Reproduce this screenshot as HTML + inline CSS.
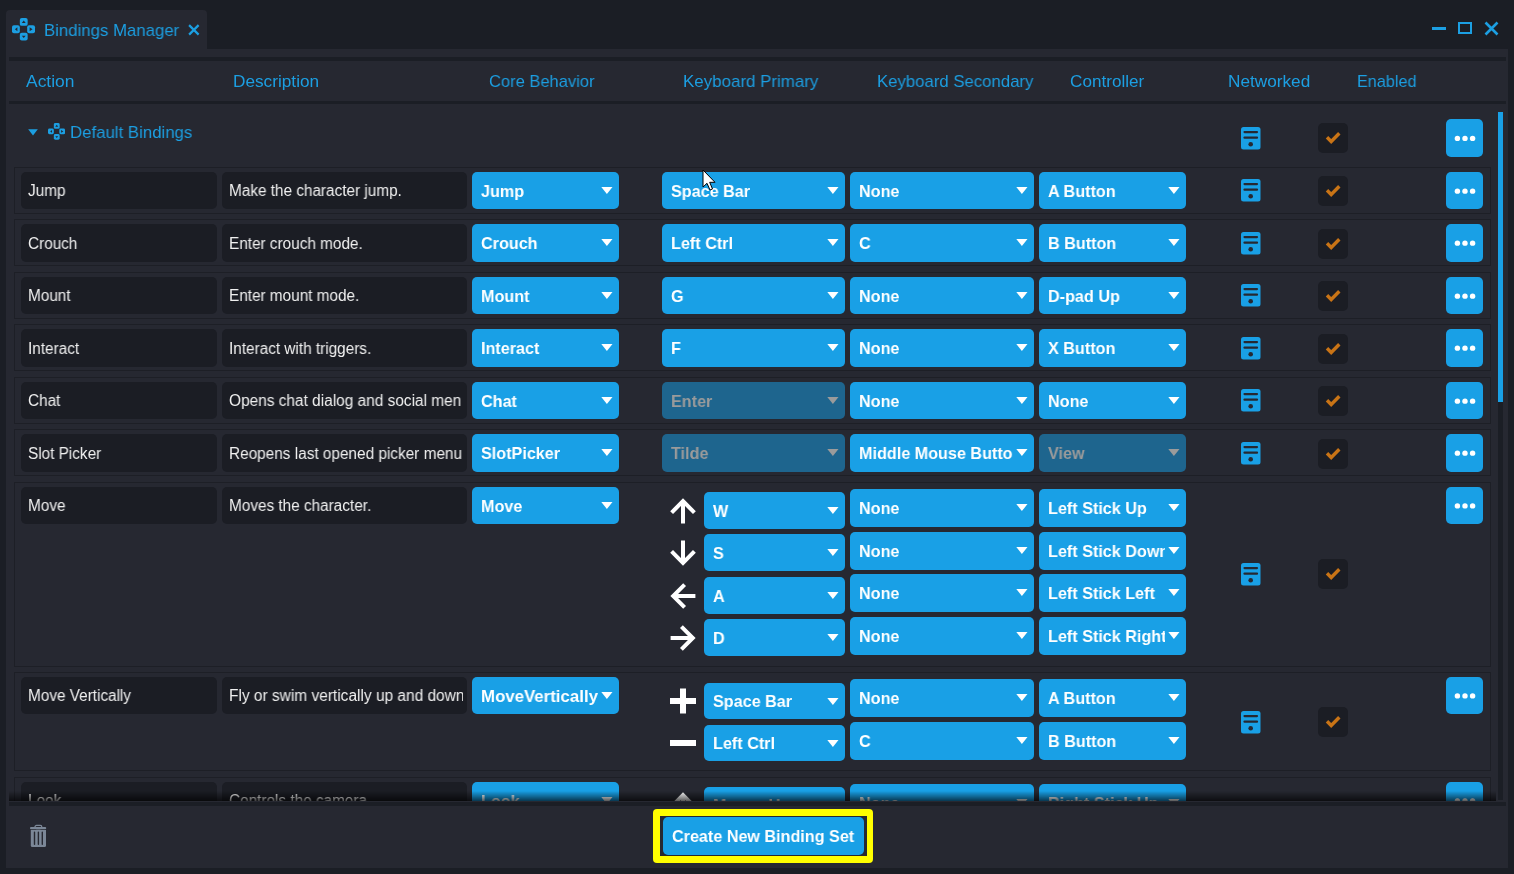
<!DOCTYPE html><html><head><meta charset="utf-8"><style>
*{margin:0;padding:0;box-sizing:border-box}
html,body{width:1514px;height:874px;overflow:hidden;background:#1b1e25;font-family:"Liberation Sans",sans-serif;-webkit-font-smoothing:antialiased}
.t,.ddt,.fldt{will-change:transform}
.t{position:absolute;white-space:nowrap;line-height:1}
.h{color:#1c9fe2;font-size:18px}
.dd{position:absolute;border-radius:5px;overflow:hidden}
.ddt{position:absolute;left:8.5px;top:10.7px;font-size:17px;font-weight:bold;line-height:1;white-space:nowrap;overflow:hidden;transform:scaleX(0.951);transform-origin:0 0}
.tri{position:absolute;right:6.4px;top:15px}
.fld{position:absolute;background:#1b1d24;border-radius:5px;overflow:hidden}
.fldt{position:absolute;left:7px;top:11.4px;font-size:15.6px;color:#f0f0f0;line-height:1;white-space:nowrap;overflow:hidden;transform:scaleX(0.958);transform-origin:0 0}
.ico{position:absolute}
.chk{position:absolute;width:30px;height:30px;background:#1b1d24;border-radius:5px}
.ell{position:absolute;width:37px;background:#19a0e6;border-radius:5px}
</style></head><body>
<div style="position:absolute;left:6px;top:10px;width:201px;height:40px;background:#262831;border-radius:4px 4px 0 0"></div>
<div style="position:absolute;left:6px;top:49px;width:1502px;height:819px;background:#262831"></div>
<svg class="ico" style="left:12.3px;top:18.1px" width="23.5" height="23.5" viewBox="0 0 24 24">
<rect x="8" y="0" width="8" height="8" rx="2" fill="#1c9fe2"/><rect x="0" y="7.5" width="8" height="8" rx="2" fill="#1c9fe2"/>
<rect x="15.5" y="7.5" width="8" height="8" rx="2" fill="#1c9fe2"/><rect x="8" y="15" width="8" height="8" rx="2" fill="#1c9fe2"/>
<path d="M12 2.5 L14 5 L10 5Z M3 11.5 L5.5 9.5 L5.5 13.5Z M21 11.5 L18 9.5 L18 13.5Z M12 20.5 L14 18 L10 18Z" fill="#262831"/></svg>
<div class="t h" style="left:43.9px;top:21.5px;font-size:17px;transform:scaleX(0.9869);transform-origin:0 0;">Bindings Manager</div>
<svg class="ico" style="left:187.7px;top:23.7px" width="12" height="12" viewBox="0 0 12 12"><path d="M1.1 1.1L10.6 10.6M10.6 1.1L1.1 10.6" stroke="#1c9fe2" stroke-width="2.2"/></svg>
<div style="position:absolute;left:1432px;top:27px;width:14px;height:3px;background:#1c9fe2"></div>
<div style="position:absolute;left:1458px;top:22.3px;width:14px;height:11.5px;border:2px solid #1c9fe2"></div>
<svg class="ico" style="left:1484px;top:21px" width="15" height="15" viewBox="0 0 15 15"><path d="M1.5 1.5L13.5 13.5M13.5 1.5L1.5 13.5" stroke="#1c9fe2" stroke-width="2.6"/></svg>
<div style="position:absolute;left:9px;top:57px;width:1497px;height:4px;background:#1b1e25"></div>
<div style="position:absolute;left:9px;top:101px;width:1497px;height:3px;background:#1b1e25"></div>
<div class="t h" style="left:26.3px;top:72.7px;font-size:17px;transform:scaleX(1.0254);transform-origin:0 0;">Action</div>
<div class="t h" style="left:233.4px;top:72.7px;font-size:17px;transform:scaleX(1.0129);transform-origin:0 0;">Description</div>
<div class="t h" style="left:489.2px;top:72.7px;font-size:17px;transform:scaleX(0.9715);transform-origin:0 0;">Core Behavior</div>
<div class="t h" style="left:683.4px;top:72.7px;font-size:17px;transform:scaleX(0.9949);transform-origin:0 0;">Keyboard Primary</div>
<div class="t h" style="left:877.4px;top:72.7px;font-size:17px;transform:scaleX(0.9849);transform-origin:0 0;">Keyboard Secondary</div>
<div class="t h" style="left:1070.4px;top:72.7px;font-size:17px;transform:scaleX(1.0081);transform-origin:0 0;">Controller</div>
<div class="t h" style="left:1227.5px;top:72.7px;font-size:17px;transform:scaleX(1.0123);transform-origin:0 0;">Networked</div>
<div class="t h" style="left:1357.4px;top:72.7px;font-size:17px;transform:scaleX(0.9535);transform-origin:0 0;">Enabled</div>
<div style="position:absolute;left:9px;top:104px;width:1487px;height:697px;overflow:hidden"><div style="position:absolute;left:-9px;top:0;width:1514px;height:697px">
<svg class="ico" style="left:27.5px;top:24.5px" width="10" height="7" viewBox="0 0 10 7"><path d="M0.2 0.2 H9.8 L5 6.6Z" fill="#1c9fe2"/></svg>
<svg class="ico" style="left:47.8px;top:18.799999999999997px" width="17.5" height="17.5" viewBox="0 0 24 24">
<rect x="8" y="0" width="8" height="8" rx="2" fill="#1c9fe2"/><rect x="0" y="7.5" width="8" height="8" rx="2" fill="#1c9fe2"/>
<rect x="15.5" y="7.5" width="8" height="8" rx="2" fill="#1c9fe2"/><rect x="8" y="15" width="8" height="8" rx="2" fill="#1c9fe2"/>
<path d="M12 2.5 L14 5 L10 5Z M3 11.5 L5.5 9.5 L5.5 13.5Z M21 11.5 L18 9.5 L18 13.5Z M12 20.5 L14 18 L10 18Z" fill="#262831"/></svg>
<div class="t h" style="left:69.9px;top:19.700000000000003px;font-size:17px;transform:scaleX(0.9879);transform-origin:0 0;">Default Bindings</div>
<svg class="ico" style="left:1241.4px;top:22.5px" width="20" height="23" viewBox="0 0 20 23"><rect x="0" y="0" width="19.5" height="22.5" rx="2.5" fill="#19a0e6"/><rect x="2.4" y="3.9" width="14.7" height="2.3" rx="1.1" fill="#262831"/><rect x="2.4" y="9.5" width="14.7" height="2.3" rx="1.1" fill="#262831"/><circle cx="9.7" cy="17.3" r="2.3" fill="#262831"/></svg>
<div class="chk" style="left:1318px;top:19px"></div><svg class="ico" style="left:1318px;top:19px" width="30" height="30" viewBox="0 0 30 30"><path d="M9 14.3 L13.2 18.5 L21.3 10.3" fill="none" stroke="#c97416" stroke-width="3.4"/></svg>
<div class="ell" style="left:1446px;top:15px;height:38px"><svg width="37" height="38" viewBox="0 0 37 38"><circle cx="11.4" cy="19.4" r="2.7" fill="#fff"/><circle cx="19" cy="19.4" r="2.7" fill="#fff"/><circle cx="26.6" cy="19.4" r="2.7" fill="#fff"/></svg></div>
<div style="position:absolute;left:14px;top:62.75px;width:1477px;height:47px;border:1px solid #1d1f26;box-sizing:border-box"></div>
<div class="fld" style="left:21px;top:67.9px;width:196px;height:37.3px"><div class="fldt" style="width:188.3px;transform:scaleX(0.9825641025641025)">Jump</div></div>
<div class="fld" style="left:222px;top:67.9px;width:245px;height:37.3px"><div class="fldt" style="width:238.2px;transform:scaleX(0.9825641025641025)">Make the character jump.</div></div>
<div class="dd" style="left:472px;top:67.9px;width:147px;height:37.3px;background:#19a0e6"><div class="ddt" style="color:#ffffff;width:123.02839116719244px;transform:scaleX(0.951)">Jump</div><svg class="tri" width="12" height="8" viewBox="0 0 12 8"><path d="M0.3 0 H11.5 L5.9 7.1Z" fill="#ffffff"/></svg></div>
<div class="dd" style="left:662px;top:67.9px;width:183px;height:37.3px;background:#19a0e6"><div class="ddt" style="color:#ffffff;width:160.8832807570978px;transform:scaleX(0.951)">Space Bar</div><svg class="tri" width="12" height="8" viewBox="0 0 12 8"><path d="M0.3 0 H11.5 L5.9 7.1Z" fill="#ffffff"/></svg></div>
<div class="dd" style="left:850px;top:67.9px;width:184px;height:37.3px;background:#19a0e6"><div class="ddt" style="color:#ffffff;width:161.9348054679285px;transform:scaleX(0.951)">None</div><svg class="tri" width="12" height="8" viewBox="0 0 12 8"><path d="M0.3 0 H11.5 L5.9 7.1Z" fill="#ffffff"/></svg></div>
<div class="dd" style="left:1039px;top:67.9px;width:147px;height:37.3px;background:#19a0e6"><div class="ddt" style="color:#ffffff;width:123.02839116719244px;transform:scaleX(0.951)">A Button</div><svg class="tri" width="12" height="8" viewBox="0 0 12 8"><path d="M0.3 0 H11.5 L5.9 7.1Z" fill="#ffffff"/></svg></div>
<svg class="ico" style="left:1241.4px;top:75.15px" width="20" height="23" viewBox="0 0 20 23"><rect x="0" y="0" width="19.5" height="22.5" rx="2.5" fill="#19a0e6"/><rect x="2.4" y="3.9" width="14.7" height="2.3" rx="1.1" fill="#262831"/><rect x="2.4" y="9.5" width="14.7" height="2.3" rx="1.1" fill="#262831"/><circle cx="9.7" cy="17.3" r="2.3" fill="#262831"/></svg>
<div class="chk" style="left:1318px;top:72.05000000000001px"></div><svg class="ico" style="left:1318px;top:72.05000000000001px" width="30" height="30" viewBox="0 0 30 30"><path d="M9 14.3 L13.2 18.5 L21.3 10.3" fill="none" stroke="#c97416" stroke-width="3.4"/></svg>
<div class="ell" style="left:1446px;top:67.69999999999999px;height:37.5px"><svg width="37" height="37.5" viewBox="0 0 37 37.5"><circle cx="11.4" cy="19.15" r="2.7" fill="#fff"/><circle cx="19" cy="19.15" r="2.7" fill="#fff"/><circle cx="26.6" cy="19.15" r="2.7" fill="#fff"/></svg></div>
<div style="position:absolute;left:14px;top:115.25px;width:1477px;height:47px;border:1px solid #1d1f26;box-sizing:border-box"></div>
<div class="fld" style="left:21px;top:120.4px;width:196px;height:37.3px"><div class="fldt" style="width:188.3px;transform:scaleX(0.9825641025641025)">Crouch</div></div>
<div class="fld" style="left:222px;top:120.4px;width:245px;height:37.3px"><div class="fldt" style="width:238.2px;transform:scaleX(0.9825641025641025)">Enter crouch mode.</div></div>
<div class="dd" style="left:472px;top:120.4px;width:147px;height:37.3px;background:#19a0e6"><div class="ddt" style="color:#ffffff;width:123.02839116719244px;transform:scaleX(0.951)">Crouch</div><svg class="tri" width="12" height="8" viewBox="0 0 12 8"><path d="M0.3 0 H11.5 L5.9 7.1Z" fill="#ffffff"/></svg></div>
<div class="dd" style="left:662px;top:120.4px;width:183px;height:37.3px;background:#19a0e6"><div class="ddt" style="color:#ffffff;width:160.8832807570978px;transform:scaleX(0.951)">Left Ctrl</div><svg class="tri" width="12" height="8" viewBox="0 0 12 8"><path d="M0.3 0 H11.5 L5.9 7.1Z" fill="#ffffff"/></svg></div>
<div class="dd" style="left:850px;top:120.4px;width:184px;height:37.3px;background:#19a0e6"><div class="ddt" style="color:#ffffff;width:161.9348054679285px;transform:scaleX(0.951)">C</div><svg class="tri" width="12" height="8" viewBox="0 0 12 8"><path d="M0.3 0 H11.5 L5.9 7.1Z" fill="#ffffff"/></svg></div>
<div class="dd" style="left:1039px;top:120.4px;width:147px;height:37.3px;background:#19a0e6"><div class="ddt" style="color:#ffffff;width:123.02839116719244px;transform:scaleX(0.951)">B Button</div><svg class="tri" width="12" height="8" viewBox="0 0 12 8"><path d="M0.3 0 H11.5 L5.9 7.1Z" fill="#ffffff"/></svg></div>
<svg class="ico" style="left:1241.4px;top:127.65px" width="20" height="23" viewBox="0 0 20 23"><rect x="0" y="0" width="19.5" height="22.5" rx="2.5" fill="#19a0e6"/><rect x="2.4" y="3.9" width="14.7" height="2.3" rx="1.1" fill="#262831"/><rect x="2.4" y="9.5" width="14.7" height="2.3" rx="1.1" fill="#262831"/><circle cx="9.7" cy="17.3" r="2.3" fill="#262831"/></svg>
<div class="chk" style="left:1318px;top:124.55000000000001px"></div><svg class="ico" style="left:1318px;top:124.55000000000001px" width="30" height="30" viewBox="0 0 30 30"><path d="M9 14.3 L13.2 18.5 L21.3 10.3" fill="none" stroke="#c97416" stroke-width="3.4"/></svg>
<div class="ell" style="left:1446px;top:120.19999999999999px;height:37.5px"><svg width="37" height="37.5" viewBox="0 0 37 37.5"><circle cx="11.4" cy="19.15" r="2.7" fill="#fff"/><circle cx="19" cy="19.15" r="2.7" fill="#fff"/><circle cx="26.6" cy="19.15" r="2.7" fill="#fff"/></svg></div>
<div style="position:absolute;left:14px;top:167.75px;width:1477px;height:47px;border:1px solid #1d1f26;box-sizing:border-box"></div>
<div class="fld" style="left:21px;top:172.89999999999998px;width:196px;height:37.3px"><div class="fldt" style="width:188.3px;transform:scaleX(0.9825641025641025)">Mount</div></div>
<div class="fld" style="left:222px;top:172.89999999999998px;width:245px;height:37.3px"><div class="fldt" style="width:238.2px;transform:scaleX(0.9825641025641025)">Enter mount mode.</div></div>
<div class="dd" style="left:472px;top:172.89999999999998px;width:147px;height:37.3px;background:#19a0e6"><div class="ddt" style="color:#ffffff;width:123.02839116719244px;transform:scaleX(0.951)">Mount</div><svg class="tri" width="12" height="8" viewBox="0 0 12 8"><path d="M0.3 0 H11.5 L5.9 7.1Z" fill="#ffffff"/></svg></div>
<div class="dd" style="left:662px;top:172.89999999999998px;width:183px;height:37.3px;background:#19a0e6"><div class="ddt" style="color:#ffffff;width:160.8832807570978px;transform:scaleX(0.951)">G</div><svg class="tri" width="12" height="8" viewBox="0 0 12 8"><path d="M0.3 0 H11.5 L5.9 7.1Z" fill="#ffffff"/></svg></div>
<div class="dd" style="left:850px;top:172.89999999999998px;width:184px;height:37.3px;background:#19a0e6"><div class="ddt" style="color:#ffffff;width:161.9348054679285px;transform:scaleX(0.951)">None</div><svg class="tri" width="12" height="8" viewBox="0 0 12 8"><path d="M0.3 0 H11.5 L5.9 7.1Z" fill="#ffffff"/></svg></div>
<div class="dd" style="left:1039px;top:172.89999999999998px;width:147px;height:37.3px;background:#19a0e6"><div class="ddt" style="color:#ffffff;width:123.02839116719244px;transform:scaleX(0.951)">D-pad Up</div><svg class="tri" width="12" height="8" viewBox="0 0 12 8"><path d="M0.3 0 H11.5 L5.9 7.1Z" fill="#ffffff"/></svg></div>
<svg class="ico" style="left:1241.4px;top:180.14999999999998px" width="20" height="23" viewBox="0 0 20 23"><rect x="0" y="0" width="19.5" height="22.5" rx="2.5" fill="#19a0e6"/><rect x="2.4" y="3.9" width="14.7" height="2.3" rx="1.1" fill="#262831"/><rect x="2.4" y="9.5" width="14.7" height="2.3" rx="1.1" fill="#262831"/><circle cx="9.7" cy="17.3" r="2.3" fill="#262831"/></svg>
<div class="chk" style="left:1318px;top:177.05px"></div><svg class="ico" style="left:1318px;top:177.05px" width="30" height="30" viewBox="0 0 30 30"><path d="M9 14.3 L13.2 18.5 L21.3 10.3" fill="none" stroke="#c97416" stroke-width="3.4"/></svg>
<div class="ell" style="left:1446px;top:172.7px;height:37.5px"><svg width="37" height="37.5" viewBox="0 0 37 37.5"><circle cx="11.4" cy="19.15" r="2.7" fill="#fff"/><circle cx="19" cy="19.15" r="2.7" fill="#fff"/><circle cx="26.6" cy="19.15" r="2.7" fill="#fff"/></svg></div>
<div style="position:absolute;left:14px;top:220.25px;width:1477px;height:47px;border:1px solid #1d1f26;box-sizing:border-box"></div>
<div class="fld" style="left:21px;top:225.39999999999998px;width:196px;height:37.3px"><div class="fldt" style="width:188.3px;transform:scaleX(0.9825641025641025)">Interact</div></div>
<div class="fld" style="left:222px;top:225.39999999999998px;width:245px;height:37.3px"><div class="fldt" style="width:238.2px;transform:scaleX(0.9825641025641025)">Interact with triggers.</div></div>
<div class="dd" style="left:472px;top:225.39999999999998px;width:147px;height:37.3px;background:#19a0e6"><div class="ddt" style="color:#ffffff;width:123.02839116719244px;transform:scaleX(0.951)">Interact</div><svg class="tri" width="12" height="8" viewBox="0 0 12 8"><path d="M0.3 0 H11.5 L5.9 7.1Z" fill="#ffffff"/></svg></div>
<div class="dd" style="left:662px;top:225.39999999999998px;width:183px;height:37.3px;background:#19a0e6"><div class="ddt" style="color:#ffffff;width:160.8832807570978px;transform:scaleX(0.951)">F</div><svg class="tri" width="12" height="8" viewBox="0 0 12 8"><path d="M0.3 0 H11.5 L5.9 7.1Z" fill="#ffffff"/></svg></div>
<div class="dd" style="left:850px;top:225.39999999999998px;width:184px;height:37.3px;background:#19a0e6"><div class="ddt" style="color:#ffffff;width:161.9348054679285px;transform:scaleX(0.951)">None</div><svg class="tri" width="12" height="8" viewBox="0 0 12 8"><path d="M0.3 0 H11.5 L5.9 7.1Z" fill="#ffffff"/></svg></div>
<div class="dd" style="left:1039px;top:225.39999999999998px;width:147px;height:37.3px;background:#19a0e6"><div class="ddt" style="color:#ffffff;width:123.02839116719244px;transform:scaleX(0.951)">X Button</div><svg class="tri" width="12" height="8" viewBox="0 0 12 8"><path d="M0.3 0 H11.5 L5.9 7.1Z" fill="#ffffff"/></svg></div>
<svg class="ico" style="left:1241.4px;top:232.64999999999998px" width="20" height="23" viewBox="0 0 20 23"><rect x="0" y="0" width="19.5" height="22.5" rx="2.5" fill="#19a0e6"/><rect x="2.4" y="3.9" width="14.7" height="2.3" rx="1.1" fill="#262831"/><rect x="2.4" y="9.5" width="14.7" height="2.3" rx="1.1" fill="#262831"/><circle cx="9.7" cy="17.3" r="2.3" fill="#262831"/></svg>
<div class="chk" style="left:1318px;top:229.55px"></div><svg class="ico" style="left:1318px;top:229.55px" width="30" height="30" viewBox="0 0 30 30"><path d="M9 14.3 L13.2 18.5 L21.3 10.3" fill="none" stroke="#c97416" stroke-width="3.4"/></svg>
<div class="ell" style="left:1446px;top:225.2px;height:37.5px"><svg width="37" height="37.5" viewBox="0 0 37 37.5"><circle cx="11.4" cy="19.15" r="2.7" fill="#fff"/><circle cx="19" cy="19.15" r="2.7" fill="#fff"/><circle cx="26.6" cy="19.15" r="2.7" fill="#fff"/></svg></div>
<div style="position:absolute;left:14px;top:272.75px;width:1477px;height:47px;border:1px solid #1d1f26;box-sizing:border-box"></div>
<div class="fld" style="left:21px;top:277.9px;width:196px;height:37.3px"><div class="fldt" style="width:188.3px;transform:scaleX(0.9825641025641025)">Chat</div></div>
<div class="fld" style="left:222px;top:277.9px;width:245px;height:37.3px"><div class="fldt" style="width:236.7px;transform:scaleX(0.9887179487179487)">Opens chat dialog and social men</div></div>
<div class="dd" style="left:472px;top:277.9px;width:147px;height:37.3px;background:#19a0e6"><div class="ddt" style="color:#ffffff;width:123.02839116719244px;transform:scaleX(0.951)">Chat</div><svg class="tri" width="12" height="8" viewBox="0 0 12 8"><path d="M0.3 0 H11.5 L5.9 7.1Z" fill="#ffffff"/></svg></div>
<div class="dd" style="left:662px;top:277.9px;width:183px;height:37.3px;background:#1e658e"><div class="ddt" style="color:#9b9b9b;width:160.8832807570978px;transform:scaleX(0.951)">Enter</div><svg class="tri" width="12" height="8" viewBox="0 0 12 8"><path d="M0.3 0 H11.5 L5.9 7.1Z" fill="#9b9b9b"/></svg></div>
<div class="dd" style="left:850px;top:277.9px;width:184px;height:37.3px;background:#19a0e6"><div class="ddt" style="color:#ffffff;width:161.9348054679285px;transform:scaleX(0.951)">None</div><svg class="tri" width="12" height="8" viewBox="0 0 12 8"><path d="M0.3 0 H11.5 L5.9 7.1Z" fill="#ffffff"/></svg></div>
<div class="dd" style="left:1039px;top:277.9px;width:147px;height:37.3px;background:#19a0e6"><div class="ddt" style="color:#ffffff;width:123.02839116719244px;transform:scaleX(0.951)">None</div><svg class="tri" width="12" height="8" viewBox="0 0 12 8"><path d="M0.3 0 H11.5 L5.9 7.1Z" fill="#ffffff"/></svg></div>
<svg class="ico" style="left:1241.4px;top:285.15px" width="20" height="23" viewBox="0 0 20 23"><rect x="0" y="0" width="19.5" height="22.5" rx="2.5" fill="#19a0e6"/><rect x="2.4" y="3.9" width="14.7" height="2.3" rx="1.1" fill="#262831"/><rect x="2.4" y="9.5" width="14.7" height="2.3" rx="1.1" fill="#262831"/><circle cx="9.7" cy="17.3" r="2.3" fill="#262831"/></svg>
<div class="chk" style="left:1318px;top:282.05px"></div><svg class="ico" style="left:1318px;top:282.05px" width="30" height="30" viewBox="0 0 30 30"><path d="M9 14.3 L13.2 18.5 L21.3 10.3" fill="none" stroke="#c97416" stroke-width="3.4"/></svg>
<div class="ell" style="left:1446px;top:277.7px;height:37.5px"><svg width="37" height="37.5" viewBox="0 0 37 37.5"><circle cx="11.4" cy="19.15" r="2.7" fill="#fff"/><circle cx="19" cy="19.15" r="2.7" fill="#fff"/><circle cx="26.6" cy="19.15" r="2.7" fill="#fff"/></svg></div>
<div style="position:absolute;left:14px;top:325.25px;width:1477px;height:47px;border:1px solid #1d1f26;box-sizing:border-box"></div>
<div class="fld" style="left:21px;top:330.4px;width:196px;height:37.3px"><div class="fldt" style="width:188.3px;transform:scaleX(0.9825641025641025)">Slot Picker</div></div>
<div class="fld" style="left:222px;top:330.4px;width:245px;height:37.3px"><div class="fldt" style="width:237.7px;transform:scaleX(0.9846153846153846)">Reopens last opened picker menu.</div></div>
<div class="dd" style="left:472px;top:330.4px;width:147px;height:37.3px;background:#19a0e6"><div class="ddt" style="color:#ffffff;width:123.02839116719244px;transform:scaleX(0.951)">SlotPicker</div><svg class="tri" width="12" height="8" viewBox="0 0 12 8"><path d="M0.3 0 H11.5 L5.9 7.1Z" fill="#ffffff"/></svg></div>
<div class="dd" style="left:662px;top:330.4px;width:183px;height:37.3px;background:#1e658e"><div class="ddt" style="color:#9b9b9b;width:160.8832807570978px;transform:scaleX(0.951)">Tilde</div><svg class="tri" width="12" height="8" viewBox="0 0 12 8"><path d="M0.3 0 H11.5 L5.9 7.1Z" fill="#9b9b9b"/></svg></div>
<div class="dd" style="left:850px;top:330.4px;width:184px;height:37.3px;background:#19a0e6"><div class="ddt" style="color:#ffffff;width:161.9348054679285px;transform:scaleX(0.951)">Middle Mouse Button</div><svg class="tri" width="12" height="8" viewBox="0 0 12 8"><path d="M0.3 0 H11.5 L5.9 7.1Z" fill="#ffffff"/></svg></div>
<div class="dd" style="left:1039px;top:330.4px;width:147px;height:37.3px;background:#1e658e"><div class="ddt" style="color:#9b9b9b;width:123.02839116719244px;transform:scaleX(0.951)">View</div><svg class="tri" width="12" height="8" viewBox="0 0 12 8"><path d="M0.3 0 H11.5 L5.9 7.1Z" fill="#9b9b9b"/></svg></div>
<svg class="ico" style="left:1241.4px;top:337.65px" width="20" height="23" viewBox="0 0 20 23"><rect x="0" y="0" width="19.5" height="22.5" rx="2.5" fill="#19a0e6"/><rect x="2.4" y="3.9" width="14.7" height="2.3" rx="1.1" fill="#262831"/><rect x="2.4" y="9.5" width="14.7" height="2.3" rx="1.1" fill="#262831"/><circle cx="9.7" cy="17.3" r="2.3" fill="#262831"/></svg>
<div class="chk" style="left:1318px;top:334.55px"></div><svg class="ico" style="left:1318px;top:334.55px" width="30" height="30" viewBox="0 0 30 30"><path d="M9 14.3 L13.2 18.5 L21.3 10.3" fill="none" stroke="#c97416" stroke-width="3.4"/></svg>
<div class="ell" style="left:1446px;top:330.2px;height:37.5px"><svg width="37" height="37.5" viewBox="0 0 37 37.5"><circle cx="11.4" cy="19.15" r="2.7" fill="#fff"/><circle cx="19" cy="19.15" r="2.7" fill="#fff"/><circle cx="26.6" cy="19.15" r="2.7" fill="#fff"/></svg></div>
<div style="position:absolute;left:14px;top:378px;width:1477px;height:185px;border:1px solid #1d1f26;box-sizing:border-box"></div>
<div class="fld" style="left:21px;top:383px;width:196px;height:37px"><div class="fldt" style="width:188.3px;transform:scaleX(0.9825641025641025)">Move</div></div>
<div class="fld" style="left:222px;top:383px;width:245px;height:37px"><div class="fldt" style="width:238.2px;transform:scaleX(0.9825641025641025)">Moves the character.</div></div>
<div class="dd" style="left:472px;top:383px;width:147px;height:37px;background:#19a0e6"><div class="ddt" style="color:#ffffff;width:123.02839116719244px;transform:scaleX(0.951)">Move</div><svg class="tri" width="12" height="8" viewBox="0 0 12 8"><path d="M0.3 0 H11.5 L5.9 7.1Z" fill="#ffffff"/></svg></div>
<svg class="ico" style="left:670px;top:393.6px" width="26" height="26" viewBox="0 0 26 26"><path transform="rotate(0 13 13)" d="M1.6 14.6 L13 3.2 L24.4 14.6 M13 3.5 V25.4" fill="none" stroke="#fff" stroke-width="4"/></svg>
<div class="dd" style="left:704px;top:388px;width:141px;height:37px;background:#19a0e6"><div class="ddt" style="color:#ffffff;width:116.71924290220821px;transform:scaleX(0.951)">W</div><svg class="tri" width="12" height="8" viewBox="0 0 12 8"><path d="M0.3 0 H11.5 L5.9 7.1Z" fill="#ffffff"/></svg></div>
<div class="dd" style="left:850px;top:385px;width:184px;height:38px;background:#19a0e6"><div class="ddt" style="color:#ffffff;width:161.9348054679285px;transform:scaleX(0.951)">None</div><svg class="tri" width="12" height="8" viewBox="0 0 12 8"><path d="M0.3 0 H11.5 L5.9 7.1Z" fill="#ffffff"/></svg></div>
<div class="dd" style="left:1039px;top:385px;width:147px;height:38px;background:#19a0e6"><div class="ddt" style="color:#ffffff;width:123.02839116719244px;transform:scaleX(0.951)">Left Stick Up</div><svg class="tri" width="12" height="8" viewBox="0 0 12 8"><path d="M0.3 0 H11.5 L5.9 7.1Z" fill="#ffffff"/></svg></div>
<svg class="ico" style="left:670px;top:435.6px" width="26" height="26" viewBox="0 0 26 26"><path transform="rotate(180 13 13)" d="M1.6 14.6 L13 3.2 L24.4 14.6 M13 3.5 V25.4" fill="none" stroke="#fff" stroke-width="4"/></svg>
<div class="dd" style="left:704px;top:430px;width:141px;height:37px;background:#19a0e6"><div class="ddt" style="color:#ffffff;width:116.71924290220821px;transform:scaleX(0.951)">S</div><svg class="tri" width="12" height="8" viewBox="0 0 12 8"><path d="M0.3 0 H11.5 L5.9 7.1Z" fill="#ffffff"/></svg></div>
<div class="dd" style="left:850px;top:428px;width:184px;height:38px;background:#19a0e6"><div class="ddt" style="color:#ffffff;width:161.9348054679285px;transform:scaleX(0.951)">None</div><svg class="tri" width="12" height="8" viewBox="0 0 12 8"><path d="M0.3 0 H11.5 L5.9 7.1Z" fill="#ffffff"/></svg></div>
<div class="dd" style="left:1039px;top:428px;width:147px;height:38px;background:#19a0e6"><div class="ddt" style="color:#ffffff;width:123.02839116719244px;transform:scaleX(0.951)">Left Stick Down</div><svg class="tri" width="12" height="8" viewBox="0 0 12 8"><path d="M0.3 0 H11.5 L5.9 7.1Z" fill="#ffffff"/></svg></div>
<svg class="ico" style="left:670px;top:478.6px" width="26" height="26" viewBox="0 0 26 26"><path transform="rotate(270 13 13)" d="M1.6 14.6 L13 3.2 L24.4 14.6 M13 3.5 V25.4" fill="none" stroke="#fff" stroke-width="4"/></svg>
<div class="dd" style="left:704px;top:473px;width:141px;height:37px;background:#19a0e6"><div class="ddt" style="color:#ffffff;width:116.71924290220821px;transform:scaleX(0.951)">A</div><svg class="tri" width="12" height="8" viewBox="0 0 12 8"><path d="M0.3 0 H11.5 L5.9 7.1Z" fill="#ffffff"/></svg></div>
<div class="dd" style="left:850px;top:470px;width:184px;height:38px;background:#19a0e6"><div class="ddt" style="color:#ffffff;width:161.9348054679285px;transform:scaleX(0.951)">None</div><svg class="tri" width="12" height="8" viewBox="0 0 12 8"><path d="M0.3 0 H11.5 L5.9 7.1Z" fill="#ffffff"/></svg></div>
<div class="dd" style="left:1039px;top:470px;width:147px;height:38px;background:#19a0e6"><div class="ddt" style="color:#ffffff;width:123.02839116719244px;transform:scaleX(0.951)">Left Stick Left</div><svg class="tri" width="12" height="8" viewBox="0 0 12 8"><path d="M0.3 0 H11.5 L5.9 7.1Z" fill="#ffffff"/></svg></div>
<svg class="ico" style="left:670px;top:520.6px" width="26" height="26" viewBox="0 0 26 26"><path transform="rotate(90 13 13)" d="M1.6 14.6 L13 3.2 L24.4 14.6 M13 3.5 V25.4" fill="none" stroke="#fff" stroke-width="4"/></svg>
<div class="dd" style="left:704px;top:515px;width:141px;height:37px;background:#19a0e6"><div class="ddt" style="color:#ffffff;width:116.71924290220821px;transform:scaleX(0.951)">D</div><svg class="tri" width="12" height="8" viewBox="0 0 12 8"><path d="M0.3 0 H11.5 L5.9 7.1Z" fill="#ffffff"/></svg></div>
<div class="dd" style="left:850px;top:513px;width:184px;height:38px;background:#19a0e6"><div class="ddt" style="color:#ffffff;width:161.9348054679285px;transform:scaleX(0.951)">None</div><svg class="tri" width="12" height="8" viewBox="0 0 12 8"><path d="M0.3 0 H11.5 L5.9 7.1Z" fill="#ffffff"/></svg></div>
<div class="dd" style="left:1039px;top:513px;width:147px;height:38px;background:#19a0e6"><div class="ddt" style="color:#ffffff;width:123.02839116719244px;transform:scaleX(0.951)">Left Stick Right</div><svg class="tri" width="12" height="8" viewBox="0 0 12 8"><path d="M0.3 0 H11.5 L5.9 7.1Z" fill="#ffffff"/></svg></div>
<svg class="ico" style="left:1241.4px;top:459.20000000000005px" width="20" height="23" viewBox="0 0 20 23"><rect x="0" y="0" width="19.5" height="22.5" rx="2.5" fill="#19a0e6"/><rect x="2.4" y="3.9" width="14.7" height="2.3" rx="1.1" fill="#262831"/><rect x="2.4" y="9.5" width="14.7" height="2.3" rx="1.1" fill="#262831"/><circle cx="9.7" cy="17.3" r="2.3" fill="#262831"/></svg>
<div class="chk" style="left:1318px;top:455px"></div><svg class="ico" style="left:1318px;top:455px" width="30" height="30" viewBox="0 0 30 30"><path d="M9 14.3 L13.2 18.5 L21.3 10.3" fill="none" stroke="#c97416" stroke-width="3.4"/></svg>
<div class="ell" style="left:1446px;top:383px;height:37px"><svg width="37" height="37" viewBox="0 0 37 37"><circle cx="11.4" cy="18.9" r="2.7" fill="#fff"/><circle cx="19" cy="18.9" r="2.7" fill="#fff"/><circle cx="26.6" cy="18.9" r="2.7" fill="#fff"/></svg></div>
<div style="position:absolute;left:14px;top:568px;width:1477px;height:99px;border:1px solid #1d1f26;box-sizing:border-box"></div>
<div class="fld" style="left:21px;top:573px;width:196px;height:37px"><div class="fldt" style="width:188.3px;transform:scaleX(0.9825641025641025)">Move Vertically</div></div>
<div class="fld" style="left:222px;top:573px;width:245px;height:37px"><div class="fldt" style="width:235.9px;transform:scaleX(0.9917948717948718)">Fly or swim vertically up and down.</div></div>
<div class="dd" style="left:472px;top:573px;width:147px;height:37px;background:#19a0e6"><div class="ddt" style="color:#ffffff;width:119.1919191919192px;transform:scaleX(0.99)">MoveVertically</div><svg class="tri" width="12" height="8" viewBox="0 0 12 8"><path d="M0.3 0 H11.5 L5.9 7.1Z" fill="#ffffff"/></svg></div>
<svg class="ico" style="left:670px;top:583.5px" width="26" height="26" viewBox="0 0 26 26"><path d="M13 0.5 V25.5 M0 13 H26" fill="none" stroke="#fff" stroke-width="6"/></svg>
<div class="dd" style="left:704px;top:578.5px;width:141px;height:36.6px;background:#19a0e6"><div class="ddt" style="color:#ffffff;width:116.71924290220821px;transform:scaleX(0.951)">Space Bar</div><svg class="tri" width="12" height="8" viewBox="0 0 12 8"><path d="M0.3 0 H11.5 L5.9 7.1Z" fill="#ffffff"/></svg></div>
<div class="dd" style="left:850px;top:575px;width:184px;height:37.6px;background:#19a0e6"><div class="ddt" style="color:#ffffff;width:161.9348054679285px;transform:scaleX(0.951)">None</div><svg class="tri" width="12" height="8" viewBox="0 0 12 8"><path d="M0.3 0 H11.5 L5.9 7.1Z" fill="#ffffff"/></svg></div>
<div class="dd" style="left:1039px;top:575px;width:147px;height:37.6px;background:#19a0e6"><div class="ddt" style="color:#ffffff;width:123.02839116719244px;transform:scaleX(0.951)">A Button</div><svg class="tri" width="12" height="8" viewBox="0 0 12 8"><path d="M0.3 0 H11.5 L5.9 7.1Z" fill="#ffffff"/></svg></div>
<svg class="ico" style="left:670px;top:625.9px" width="26" height="26" viewBox="0 0 26 26"><path d="M0 13 H26" fill="none" stroke="#fff" stroke-width="6"/></svg>
<div class="dd" style="left:704px;top:620.7px;width:141px;height:36.6px;background:#19a0e6"><div class="ddt" style="color:#ffffff;width:116.71924290220821px;transform:scaleX(0.951)">Left Ctrl</div><svg class="tri" width="12" height="8" viewBox="0 0 12 8"><path d="M0.3 0 H11.5 L5.9 7.1Z" fill="#ffffff"/></svg></div>
<div class="dd" style="left:850px;top:618px;width:184px;height:37.6px;background:#19a0e6"><div class="ddt" style="color:#ffffff;width:161.9348054679285px;transform:scaleX(0.951)">C</div><svg class="tri" width="12" height="8" viewBox="0 0 12 8"><path d="M0.3 0 H11.5 L5.9 7.1Z" fill="#ffffff"/></svg></div>
<div class="dd" style="left:1039px;top:618px;width:147px;height:37.6px;background:#19a0e6"><div class="ddt" style="color:#ffffff;width:123.02839116719244px;transform:scaleX(0.951)">B Button</div><svg class="tri" width="12" height="8" viewBox="0 0 12 8"><path d="M0.3 0 H11.5 L5.9 7.1Z" fill="#ffffff"/></svg></div>
<svg class="ico" style="left:1241.4px;top:606.7px" width="20" height="23" viewBox="0 0 20 23"><rect x="0" y="0" width="19.5" height="22.5" rx="2.5" fill="#19a0e6"/><rect x="2.4" y="3.9" width="14.7" height="2.3" rx="1.1" fill="#262831"/><rect x="2.4" y="9.5" width="14.7" height="2.3" rx="1.1" fill="#262831"/><circle cx="9.7" cy="17.3" r="2.3" fill="#262831"/></svg>
<div class="chk" style="left:1318px;top:603px"></div><svg class="ico" style="left:1318px;top:603px" width="30" height="30" viewBox="0 0 30 30"><path d="M9 14.3 L13.2 18.5 L21.3 10.3" fill="none" stroke="#c97416" stroke-width="3.4"/></svg>
<div class="ell" style="left:1446px;top:573px;height:37px"><svg width="37" height="37" viewBox="0 0 37 37"><circle cx="11.4" cy="18.9" r="2.7" fill="#fff"/><circle cx="19" cy="18.9" r="2.7" fill="#fff"/><circle cx="26.6" cy="18.9" r="2.7" fill="#fff"/></svg></div>
<div style="position:absolute;left:14px;top:673px;width:1477px;height:99px;border:1px solid #1d1f26;box-sizing:border-box"></div>
<div class="fld" style="left:21px;top:678px;width:196px;height:37px"><div class="fldt" style="width:188.3px;transform:scaleX(0.9825641025641025)">Look</div></div>
<div class="fld" style="left:222px;top:678px;width:245px;height:37px"><div class="fldt" style="width:238.2px;transform:scaleX(0.9825641025641025)">Controls the camera.</div></div>
<div class="dd" style="left:472px;top:678px;width:147px;height:37px;background:#19a0e6"><div class="ddt" style="color:#ffffff;width:123.02839116719244px;transform:scaleX(0.951)">Look</div><svg class="tri" width="12" height="8" viewBox="0 0 12 8"><path d="M0.3 0 H11.5 L5.9 7.1Z" fill="#ffffff"/></svg></div>
<svg class="ico" style="left:670px;top:688.4px" width="26" height="26" viewBox="0 0 26 26"><path transform="rotate(0 13 13)" d="M1.6 14.6 L13 3.2 L24.4 14.6 M13 3.5 V25.4" fill="none" stroke="#fff" stroke-width="4"/></svg>
<div class="dd" style="left:704px;top:682.8px;width:141px;height:37px;background:#19a0e6"><div class="ddt" style="color:#ffffff;width:116.71924290220821px;transform:scaleX(0.951)">Mouse Up</div><svg class="tri" width="12" height="8" viewBox="0 0 12 8"><path d="M0.3 0 H11.5 L5.9 7.1Z" fill="#ffffff"/></svg></div>
<div class="dd" style="left:850px;top:680px;width:184px;height:38px;background:#19a0e6"><div class="ddt" style="color:#ffffff;width:161.9348054679285px;transform:scaleX(0.951)">None</div><svg class="tri" width="12" height="8" viewBox="0 0 12 8"><path d="M0.3 0 H11.5 L5.9 7.1Z" fill="#ffffff"/></svg></div>
<div class="dd" style="left:1039px;top:680px;width:147px;height:38px;background:#19a0e6"><div class="ddt" style="color:#ffffff;width:123.02839116719244px;transform:scaleX(0.951)">Right Stick Up</div><svg class="tri" width="12" height="8" viewBox="0 0 12 8"><path d="M0.3 0 H11.5 L5.9 7.1Z" fill="#ffffff"/></svg></div>
<div class="ell" style="left:1446px;top:678px;height:37px"><svg width="37" height="37" viewBox="0 0 37 37"><circle cx="11.4" cy="18.9" r="2.7" fill="#fff"/><circle cx="19" cy="18.9" r="2.7" fill="#fff"/><circle cx="26.6" cy="18.9" r="2.7" fill="#fff"/></svg></div>
<div style="position:absolute;left:0;top:687px;width:1514px;height:10px;background:linear-gradient(to bottom, rgba(0,0,0,0), rgba(0,0,0,0.65))"></div>
</div></div>
<div style="position:absolute;left:1498px;top:112px;width:5px;height:688px;background:#1b1e25"></div>
<div style="position:absolute;left:1498px;top:112px;width:5px;height:290px;background:#19a0e6"></div>
<div style="position:absolute;left:9px;top:802px;width:1497px;height:4px;background:#1b1e25"></div>
<svg class="ico" style="left:30px;top:824px" width="17" height="24" viewBox="0 0 17 24">
<rect x="0" y="3.1" width="16.2" height="2.1" rx="1" fill="#7b8797"/>
<rect x="5" y="1.4" width="6.8" height="3.2" rx="1.5" fill="none" stroke="#7b8797" stroke-width="1.3"/>
<path d="M0.8 6 H16 V21.5 Q16 23 14.5 23 H2.3 Q0.8 23 0.8 21.5 Z" fill="#7b8797"/>
<path d="M4.5 8.3 V20.2 M8.4 8.3 V20.2 M12.3 8.3 V20.2" stroke="#262831" stroke-width="1.4" stroke-linecap="round"/></svg>
<div style="position:absolute;left:653.2px;top:808.5px;width:220px;height:54.5px;background:#ffff00;border-radius:4px"></div>
<div style="position:absolute;left:660px;top:815.5px;width:206.5px;height:40.5px;background:#262831"></div>
<div style="position:absolute;left:663px;top:817px;width:201px;height:38px;background:#19a0e6;border-radius:5px"></div>
<div class="t " style="left:672.1px;top:827.7px;font-size:17px;font-weight:bold;color:#fff;transform:scaleX(0.95);transform-origin:0 0">Create New Binding Set</div>
<svg class="ico" style="left:701.5px;top:169.2px" width="16" height="23" viewBox="0 0 16 23">
<path d="M1 1 V18 L5 14.3 L8 21 L10.5 20 L7.7 13.3 L13 13.3 Z" fill="#fff" stroke="#000" stroke-width="1"/></svg>
</body></html>
